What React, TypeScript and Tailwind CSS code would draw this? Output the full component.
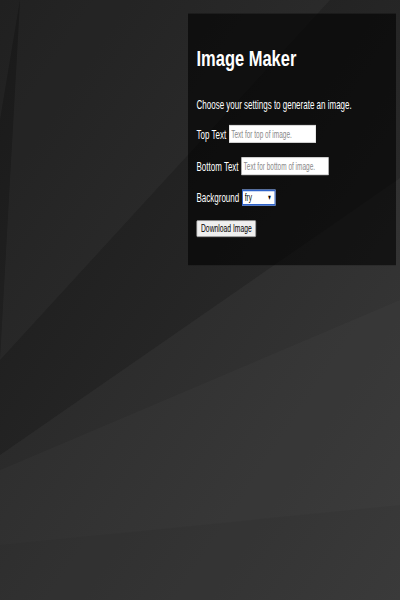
import React from 'react';

const Backdrop = () => (
  <svg
    viewBox="0 0 400 600"
    preserveAspectRatio="none"
    className="absolute inset-0 w-full h-full"
  >
    <defs>
      <linearGradient id="base" x1="0" y1="0" x2="1" y2="1">
        <stop offset="0" stopColor="#191919" />
        <stop offset="1" stopColor="#323232" />
      </linearGradient>
    </defs>
    <rect width="400" height="600" fill="url(#base)" />
    {/* soft light rays */}
    <polygon points="20,0 330,0 0,360" fill="#ffffff" fillOpacity="0.035" />
    <polygon points="0,455 400,178 400,600 0,600" fill="#ffffff" fillOpacity="0.04" />
    <polygon points="0,470 400,300 400,600 0,600" fill="#ffffff" fillOpacity="0.02" />
    <polygon points="0,545 400,505 400,600 0,600" fill="#000000" fillOpacity="0.04" />
    <polygon points="0,0 20,0 0,120" fill="#ffffff" fillOpacity="0.03" />
  </svg>
);

const App = () => {
  return (
    <div className="relative w-[400px] h-[600px] overflow-hidden bg-[#1f1f1f] font-['Liberation_Sans',Arial,sans-serif]">
      <Backdrop />

      {/* page is laid out at 800px and squeezed into the window */}
      <div className="relative w-[800px] h-[706px] origin-top-left scale-x-[0.5] scale-y-[0.85] flex justify-end items-start pr-2 pt-4">
        <div className="w-[416px] h-[296px] bg-black/60 pl-[17px] pt-[38px] flex flex-col items-start text-white">
          <h1 className="inline-block origin-left scale-x-[1.22] text-[27px] leading-[30px] font-bold">
            Image Maker
          </h1>

          <p className="mt-[30px] text-[16px] leading-[18px]">
            Choose your settings to generate an image.
          </p>

          <div className="mt-[15px] flex items-center gap-[6px] text-[16px] leading-[18px]">
            <span>Top Text</span>
            <input
              type="text"
              placeholder="Text for top of image."
              className="w-[174px] h-[21px] bg-white border border-[#cfcfcf] px-[3px] text-[13px] text-black placeholder:text-[#8a8a8a] outline-none"
            />
          </div>

          <div className="mt-[17px] flex items-center gap-[6px] text-[16px] leading-[18px]">
            <span>Bottom Text</span>
            <input
              type="text"
              placeholder="Text for bottom of image."
              className="w-[174px] h-[21px] bg-white border border-[#cfcfcf] px-[3px] text-[13px] text-black placeholder:text-[#8a8a8a] outline-none"
            />
          </div>

          <div className="mt-[17px] flex items-center gap-[6px] text-[16px] leading-[18px]">
            <span>Background</span>
            <div className="relative">
              <select className="appearance-none w-[67px] h-[19px] bg-white border-2 border-[#2f63c9] pl-[3px] text-[13px] leading-[15px] text-black outline-none">
                <option>fry</option>
                <option>doge</option>
                <option>grumpy</option>
              </select>
              <span className="absolute right-[8px] top-[3px] text-[9px] leading-[13px] text-black pointer-events-none">
                ▼
              </span>
            </div>
          </div>

          <button className="mt-[17px] h-[20px] px-[8px] bg-[#efefef] border border-[#8a8a8a] rounded-[2px] text-[13.5px] leading-[16px] text-black">
            Download Image
          </button>
        </div>
      </div>
    </div>
  );
};

export default App;
